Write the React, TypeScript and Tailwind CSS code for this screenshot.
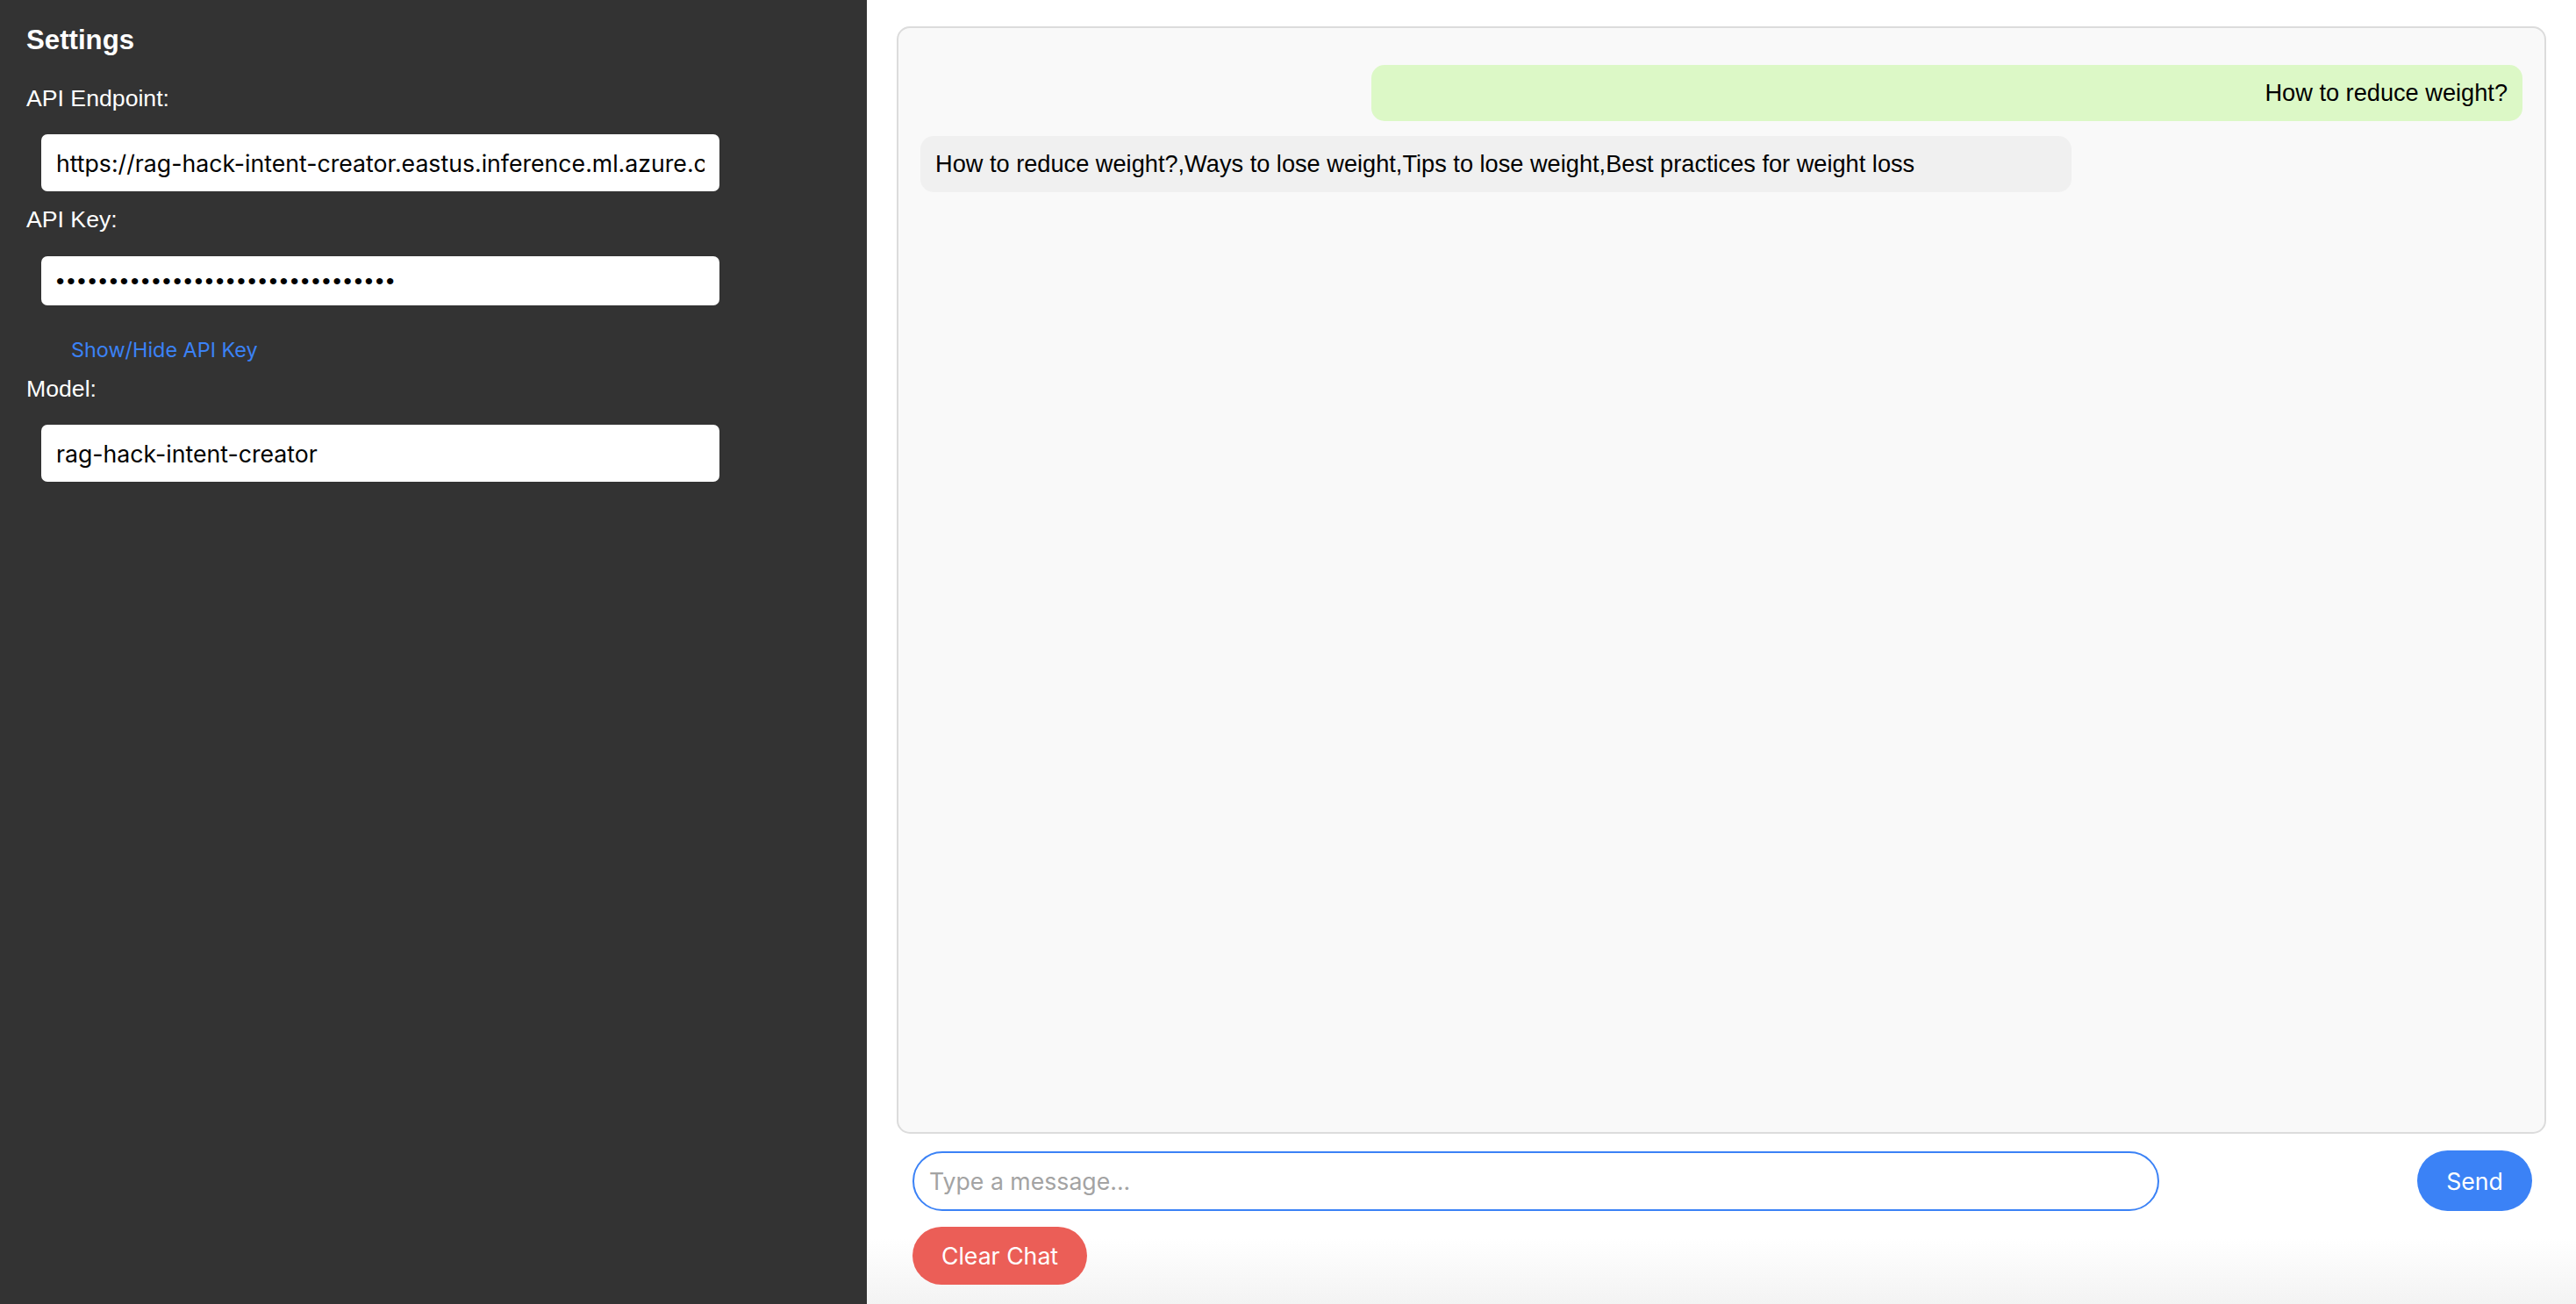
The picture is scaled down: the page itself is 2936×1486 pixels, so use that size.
import React from "react";

export default function App() {
  const bubbles = [
    { from: "user", text: "How to reduce weight?" },
    {
      from: "bot",
      text: "How to reduce weight?,Ways to lose weight,Tips to lose weight,Best practices for weight loss",
    },
  ];
  return (
    <div className="flex h-[1486px] w-full overflow-hidden font-['Liberation_Sans',Arial,sans-serif]">
      <aside className="w-[988px] shrink-0 bg-[#333333] pl-[30px] pt-[28px] text-white">
        <h3 className="h-[36px] text-[31.2px] font-bold leading-[36px]">Settings</h3>
        <label className="mt-[33px] block h-[31px] text-[26.67px] leading-[31px]">API Endpoint:</label>
        <input
          readOnly
          value="https://rag-hack-intent-creator.eastus.inference.ml.azure.com/score"
          className="mt-[25px] ml-[17px] block h-[65px] w-[773px] rounded-[7px] bg-white px-[17px] font-['Inter',sans-serif] text-[26.67px] text-black outline-none"
        />
        <label className="mt-[17px] block h-[31px] text-[26.67px] leading-[31px]">API Key:</label>
        <input
          readOnly
          value={"\u2022".repeat(32)}
          className="mt-[26px] ml-[17px] block h-[56px] w-[773px] rounded-[7px] bg-white px-[17px] font-['Liberation_Sans',Arial,sans-serif] text-[26.67px] tracking-[2.8px] text-black outline-none"
        />
        <button className="mt-[37px] ml-[51px] block h-[27px] font-['Inter',sans-serif] text-[23.4px] leading-[27px] text-[#3b82f6]">
          Show/Hide API Key
        </button>
        <label className="mt-[16px] block h-[31px] text-[26.67px] leading-[31px]">Model:</label>
        <input
          readOnly
          value="rag-hack-intent-creator"
          className="mt-[25px] ml-[17px] block h-[65px] w-[773px] rounded-[7px] bg-white px-[17px] font-['Inter',sans-serif] text-[26.67px] text-black outline-none"
        />
      </aside>

      <main className="flex-1 bg-[linear-gradient(to_bottom,#ffffff_95%,#f3f3f3_100%)] pl-[34px] pr-[34px] pt-[30px]">
        <div className="h-[1262px] rounded-[15px] border-2 border-[#dcdcdc] bg-[#f9f9f9] p-[25px]">
          {bubbles.map((b, i) =>
            b.from === "user" ? (
              <div
                key={i}
                className="my-[17px] ml-auto w-[1312px] rounded-[15px] bg-[#dcf8c6] px-[17px] py-[17px] text-right text-[27.2px] leading-[30px] text-black"
              >
                {b.text}
              </div>
            ) : (
              <div
                key={i}
                className="my-[17px] w-[1312px] rounded-[15px] bg-[#f0f0f0] px-[17px] py-[17px] text-[27.2px] leading-[30px] text-black"
              >
                {b.text}
              </div>
            )
          )}
        </div>

        <div className="mt-[19px] flex items-center justify-between pl-[18px] pr-[16px]">
          <input
            placeholder="Type a message..."
            className="h-[68px] w-[1421px] rounded-full border-2 border-[#3b82f6] bg-white px-[17px] font-['Inter',sans-serif] text-[26.67px] text-black outline-none placeholder:text-[#a3a3a3]"
          />
          <button className="h-[69px] w-[131px] rounded-full bg-[#3b82f6] font-['Inter',sans-serif] text-[26.67px] text-white">
            Send
          </button>
        </div>
        <button className="mt-[18px] ml-[18px] block h-[66px] w-[199px] rounded-full bg-[#eb5e57] font-['Inter',sans-serif] text-[26.67px] text-white">
          Clear Chat
        </button>
      </main>
    </div>
  );
}
